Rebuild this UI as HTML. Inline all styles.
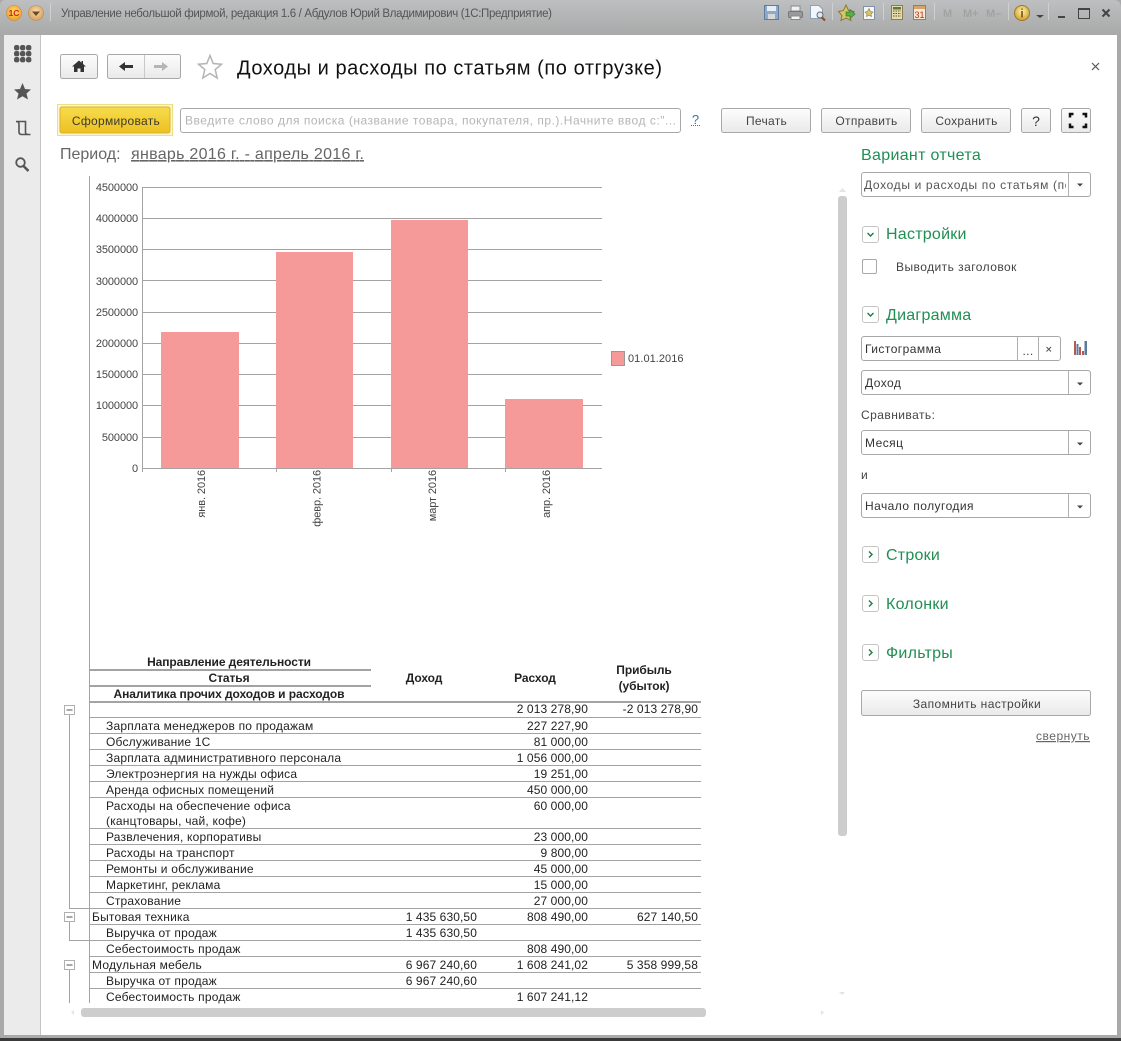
<!DOCTYPE html>
<html lang="ru"><head><meta charset="utf-8"><title>Доходы и расходы</title>
<style>
html,body{margin:0;padding:0;background:#fff;width:1121px;height:1041px;overflow:hidden}
svg{display:block;font-family:"Liberation Sans",sans-serif}
.t{font-size:12px;fill:#222;letter-spacing:.2px}
.r{font-size:12px;fill:#222;text-anchor:end;letter-spacing:.1px}
.b{font-size:12px;fill:#222;font-weight:bold;text-anchor:middle;letter-spacing:-.08px}
.g{font-size:16px;fill:#1f8f52;letter-spacing:.25px}
.f{font-size:12px;fill:#444;letter-spacing:.45px}
.c{font-size:12px;fill:#444;text-anchor:middle;letter-spacing:.3px}
.a{font-size:11px;fill:#444;text-anchor:end;letter-spacing:-.1px}
.l{stroke:#a3a3a3;stroke-width:1;fill:none}
.btn{fill:url(#bg);stroke:#a8a8a8}
.box{fill:#fff;stroke:#a8a8a8}
.exp{fill:#fff;stroke:#c4c4c4}
.chev{fill:none;stroke:#1a7a45;stroke-width:1.4}
</style></head><body>
<svg width="1121" height="1041" viewBox="0 0 1121 1041" xmlns="http://www.w3.org/2000/svg">
<defs>
<linearGradient id="tb" x1="0" y1="0" x2="0" y2="1"><stop offset="0" stop-color="#bdbfc0"/><stop offset="1" stop-color="#a8a8a8"/></linearGradient>
<linearGradient id="bg" x1="0" y1="0" x2="0" y2="1"><stop offset="0" stop-color="#fdfdfd"/><stop offset="1" stop-color="#e9e9e9"/></linearGradient>
<linearGradient id="yb" x1="0" y1="0" x2="0" y2="1"><stop offset="0" stop-color="#f7dc4c"/><stop offset="1" stop-color="#edc022"/></linearGradient>
<radialGradient id="o1" cx=".5" cy=".4" r=".6"><stop offset="0" stop-color="#ffe36a"/><stop offset="1" stop-color="#ef9a2c"/></radialGradient>
<radialGradient id="o2" cx=".5" cy=".4" r=".6"><stop offset="0" stop-color="#f6dcae"/><stop offset="1" stop-color="#d7a05c"/></radialGradient>
<radialGradient id="o3" cx=".5" cy=".4" r=".6"><stop offset="0" stop-color="#fff3b0"/><stop offset="1" stop-color="#cf9f2c"/></radialGradient>
</defs>
<!-- window frame -->
<rect width="1121" height="1041" fill="#a9a9a9"/>
<rect y="1038" width="1121" height="3" fill="#3a3a3a"/>
<path d="M0 36V6Q0 0 6 0H1113Q1121 0 1121 8V36Z" fill="url(#tb)"/>
<rect x="4" y="35" width="36" height="1000" fill="#ebebeb"/>
<rect x="40" y="35" width="1" height="1000" fill="#c4c4c4"/>
<rect x="41" y="35" width="1076" height="1000" fill="#fff"/>
<!-- title bar -->
<circle cx="14" cy="13" r="7.5" fill="url(#o1)" stroke="#d08a30" stroke-width=".6"/>
<text x="14" y="16" font-size="8.5" font-weight="bold" fill="#c9281e" text-anchor="middle">1С</text>
<circle cx="36" cy="13" r="7.5" fill="url(#o2)" stroke="#b98a50" stroke-width=".6"/>
<path d="M32 11.5h8l-4 4.5z" fill="#6a4a24"/>
<path d="M50.500 3V21M832.500 3V20M883.500 3V20M934.500 3V20M1008.500 3V20M1048.500 3V20" stroke="#d0d0d0" fill="none"/>
<text x="61" y="17" font-size="11.5" fill="#555" textLength="491" lengthAdjust="spacing">Управление небольшой фирмой, редакция 1.6 / Абдулов Юрий Владимирович  (1С:Предприятие)</text>
<!-- save -->
<rect x="764.500" y="5.500" width="14" height="14" fill="#8dabc8" stroke="#5f7c9c"/><rect x="767" y="6" width="9" height="5" fill="#e6eef5"/><rect x="768" y="14" width="7" height="5" fill="#d5d9dc"/>
<!-- print -->
<rect x="791" y="6" width="9" height="5" fill="#f0f0f0" stroke="#888"/><rect x="788.500" y="11.500" width="14" height="6" rx="1.500" fill="#9a9a9a" stroke="#777"/><rect x="791" y="16" width="9" height="3.500" fill="#f4f4f4" stroke="#888"/>
<!-- preview -->
<path d="M810.500 5.500H819L822.500 9V18.500H810.500Z" fill="#f2f6fa" stroke="#8da1b6"/><circle cx="820" cy="15" r="3" fill="#dfe9f2" stroke="#666"/><path d="M822 17.500L825 20.500" stroke="#8a4a2a" stroke-width="2"/>
<!-- star arrow -->
<path d="M846 5L848.500 10.500L854 11.500L850 15.500L851 20.500L846 18L841 20.500L842 15.500L838.500 11.500L843.500 10.500Z" fill="#d8c66a" stroke="#8c7a34"/>
<path d="M846 12h4v-2.500l5 4.500l-5 4.500V16h-4z" fill="#57b04a" stroke="#2f7a2c" stroke-width=".7"/>
<!-- star doc -->
<rect x="863.500" y="6.500" width="11" height="13" fill="#f4f7fa" stroke="#7d93ab"/><path d="M869 8.500L870.500 11.500L873 12L871 14L871.500 16.500L869 15.200L866.500 16.500L867 14L865 12L867.500 11.500Z" fill="#d9c56a" stroke="#8c7a34" stroke-width=".6"/>
<!-- calc -->
<rect x="891.500" y="5.500" width="11" height="14" fill="#e8dcae" stroke="#8d7c4c"/><rect x="893" y="7" width="8" height="2.500" fill="#5c7a3a"/><path d="M893 11h8M893 13.500h8M893 16h8" stroke="#4e5b33" stroke-dasharray="1.500 1"/>
<!-- calendar -->
<rect x="913.500" y="5.500" width="12" height="14" fill="#f5e8d4" stroke="#9a7d5c"/><rect x="914" y="6" width="11" height="3" fill="#d4a468"/>
<text x="919.500" y="18" font-size="9" fill="#b5331e" text-anchor="middle">31</text>
<!-- M keys -->
<g font-size="11" font-weight="bold" fill="#a3a2a0"><text x="943" y="17">M</text><text x="963" y="17">M+</text><text x="986" y="17">M–</text></g>
<circle cx="1022" cy="13" r="7.500" fill="url(#o3)" stroke="#9c7a2a"/><text x="1022" y="17.500" font-size="12" font-weight="bold" fill="#7a5510" text-anchor="middle">i</text>
<path d="M1036 15h8l-4 3z" fill="#444"/>
<rect x="1058" y="16" width="7" height="2" fill="#444"/>
<rect x="1078.500" y="8.500" width="11" height="10" fill="none" stroke="#444"/><rect x="1078" y="8" width="12" height="2" fill="#444"/>
<path d="M1102.500 9.500L1109.500 16.500M1109.500 9.500L1102.500 16.500" stroke="#444" stroke-width="2" fill="none"/>
<!-- sidebar icons -->
<g fill="#555"><rect x="14" y="45" width="5.400" height="5.400" rx="2.200"/><rect x="20" y="45" width="5.400" height="5.400" rx="2.200"/><rect x="26" y="45" width="5.400" height="5.400" rx="2.200"/><rect x="14" y="51" width="5.400" height="5.400" rx="2.200"/><rect x="20" y="51" width="5.400" height="5.400" rx="2.200"/><rect x="26" y="51" width="5.400" height="5.400" rx="2.200"/><rect x="14" y="57" width="5.400" height="5.400" rx="2.200"/><rect x="20" y="57" width="5.400" height="5.400" rx="2.200"/><rect x="26" y="57" width="5.400" height="5.400" rx="2.200"/></g>
<path d="M22.500 83L25 89L31 89.500L26.500 93.500L28 99.500L22.500 96.300L17 99.500L18.500 93.500L14 89.500L20 89Z" fill="#555"/>
<path d="M16 121.500H25.500V132.500Q25.500 134.500 28 134.500H30.500M16 121.500Q19 121.500 19 124V132Q19 134.500 22 134.500H28M25.500 121.500Q25.500 124 25.500 124" fill="none" stroke="#555" stroke-width="1.600"/>
<circle cx="20.500" cy="162.500" r="4.300" fill="none" stroke="#555" stroke-width="1.800"/><path d="M23.500 166L28.500 171" stroke="#555" stroke-width="2.600" fill="none"/>
<!-- nav -->
<rect class="btn" x="60.500" y="54.500" width="37" height="24" rx="2"/>
<path d="M79 60.500L72 66.500H74V72H77.500V68.500H80.500V72H84V66.500H86L83 64V61H81.500V62.700Z" fill="#333"/>
<rect class="btn" x="107.500" y="54.500" width="73" height="24" rx="2"/>
<path d="M144.500 55V78" stroke="#c8c8c8"/>
<path d="M119 66.500L125 62V65H133V68H125V71Z" fill="#333"/>
<path d="M168 66.500L162 62V65H154V68H162V71Z" fill="#b5b5b5"/>
<path d="M210 55.500L213.200 63.500L221.500 64.200L215.200 69.500L217.200 78L210 73.500L202.800 78L204.800 69.500L198.500 64.200L206.800 63.500Z" fill="#fff" stroke="#b4b4b4" stroke-width="1.500"/>
<text x="237" y="74.500" font-size="20" fill="#111" textLength="425" lengthAdjust="spacing">Доходы и расходы по статьям (по отгрузке)</text>
<path d="M1092 63L1099 70M1099 63L1092 70" stroke="#555" stroke-width="1.200" fill="none"/>
<!-- toolbar -->
<rect x="57.500" y="104.500" width="115" height="31" fill="#fbf6d4" stroke="#ecdf84"/>
<rect x="60" y="107" width="110" height="26" rx="2" fill="url(#yb)" stroke="#d9b32c"/>
<text x="116" y="125" class="c" style="fill:#3b3b2a">Сформировать</text>
<rect class="box" x="180.500" y="108.500" width="500" height="24" rx="2.500"/>
<text x="185" y="124.500" font-size="12" fill="#b5b5b5" textLength="491" lengthAdjust="spacing">Введите слово для поиска (название товара, покупателя, пр.).Начните ввод с:"...</text>
<text x="695.500" y="124" font-size="13" fill="#2b7da8" text-anchor="middle">?</text>
<path d="M691 125.500H700" stroke="#2b7da8" stroke-dasharray="1 1"/>
<rect class="btn" x="721.500" y="108.500" width="89" height="24" rx="2"/><text x="766.500" y="125" class="c">Печать</text>
<rect class="btn" x="821.500" y="108.500" width="89" height="24" rx="2"/><text x="866.500" y="125" class="c">Отправить</text>
<rect class="btn" x="921.500" y="108.500" width="89" height="24" rx="2"/><text x="966.500" y="125" class="c">Сохранить</text>
<rect class="btn" x="1021.500" y="108.500" width="29" height="24" rx="2"/><text x="1036" y="126" font-size="14" fill="#333" text-anchor="middle">?</text>
<rect class="btn" x="1061.500" y="108.500" width="29" height="24" rx="2"/>
<path d="M1070 117.500V114H1073.500M1082.500 114H1086V117.500M1086 123.500V127H1082.500M1073.500 127H1070V123.500" fill="none" stroke="#111" stroke-width="2.500"/>
<!-- period -->
<text x="60" y="159" font-size="16" fill="#666">Период:</text>
<text x="131" y="159" font-size="16" fill="#666" text-decoration="underline" textLength="233" lengthAdjust="spacing">январь 2016 г. - апрель 2016 г.</text>
<!-- chart -->
<path class="l" d="M89.500 176V1003"/>
<path class="l" d="M142 187.500H602M142 218.500H602M142 249.500H602M142 280.500H602M142 312.500H602M142 343.500H602M142 374.500H602M142 405.500H602M142 437.500H602M142 468.500H602M142.500 187V472M276.500 468V472M391.500 468V472M505.500 468V472"/>
<g fill="#f59a98"><rect x="161" y="332" width="78" height="136"/><rect x="276" y="252" width="77" height="216"/><rect x="391" y="220" width="77" height="248"/><rect x="505" y="399" width="78" height="69"/></g>
<text class="a" x="138" y="191">4500000</text><text class="a" x="138" y="222">4000000</text><text class="a" x="138" y="253">3500000</text><text class="a" x="138" y="285">3000000</text><text class="a" x="138" y="316">2500000</text><text class="a" x="138" y="347">2000000</text><text class="a" x="138" y="378">1500000</text><text class="a" x="138" y="409">1000000</text><text class="a" x="138" y="441">500000</text><text class="a" x="138" y="472">0</text>
<text class="a" transform="translate(205 470) rotate(-90)">янв. 2016</text>
<text class="a" transform="translate(320.500 470) rotate(-90)">февр. 2016</text>
<text class="a" transform="translate(436 470) rotate(-90)">март 2016</text>
<text class="a" transform="translate(550 470) rotate(-90)">апр. 2016</text>
<rect x="611.500" y="351.500" width="13" height="14" fill="#f59a98" stroke="#999"/>
<text x="628" y="362" font-size="11" fill="#444" letter-spacing=".05">01.01.2016</text>
<!-- table header -->
<text class="b" x="229" y="666">Направление деятельности</text>
<text class="b" x="229" y="682">Статья</text>
<text class="b" x="229" y="698">Аналитика прочих доходов и расходов</text>
<text class="b" x="424" y="682">Доход</text><text class="b" x="535" y="682">Расход</text>
<text class="b" x="644" y="674">Прибыль</text><text class="b" x="644" y="690">(убыток)</text>
<path d="M89 670H371M89 686H371M89 702H701" stroke="#a3a3a3" stroke-width="2" fill="none"/>
<path class="l" d="M89 717.500H701M89 733.500H701M89 749.500H701M89 765.500H701M89 781.500H701M89 797.500H701M89 828.500H701M89 844.500H701M89 860.500H701M89 876.500H701M89 892.500H701M89 908.500H701M89 924.500H701M89 940.500H701M89 956.500H701M89 972.500H701M89 988.500H701"/>
<!-- tree -->
<path class="l" d="M69.500 715V908.500H89M69.500 922V940.500H89M69.500 970V1003"/>
<rect class="exp" x="64.500" y="705.500" width="10" height="9" style="stroke:#b0b0b0"/><path d="M66.500 710H72.500" stroke="#555"/>
<rect class="exp" x="64.500" y="912.500" width="10" height="9" style="stroke:#b0b0b0"/><path d="M66.500 917H72.500" stroke="#555"/>
<rect class="exp" x="64.500" y="960.500" width="10" height="9" style="stroke:#b0b0b0"/><path d="M66.500 965H72.500" stroke="#555"/>
<!-- rows -->
<text class="r" x="588" y="713">2 013 278,90</text><text class="r" x="698" y="713">-2 013 278,90</text>
<text class="t" x="106" y="730">Зарплата менеджеров по продажам</text><text class="r" x="588" y="730">227 227,90</text>
<text class="t" x="106" y="746">Обслуживание 1С</text><text class="r" x="588" y="746">81 000,00</text>
<text class="t" x="106" y="762">Зарплата административного персонала</text><text class="r" x="588" y="762">1 056 000,00</text>
<text class="t" x="106" y="778">Электроэнергия на нужды офиса</text><text class="r" x="588" y="778">19 251,00</text>
<text class="t" x="106" y="794">Аренда офисных помещений</text><text class="r" x="588" y="794">450 000,00</text>
<text class="t" x="106" y="810">Расходы на обеспечение офиса</text><text class="r" x="588" y="810">60 000,00</text>
<text class="t" x="106" y="825">(канцтовары, чай, кофе)</text>
<text class="t" x="106" y="841">Развлечения, корпоративы</text><text class="r" x="588" y="841">23 000,00</text>
<text class="t" x="106" y="857">Расходы на транспорт</text><text class="r" x="588" y="857">9 800,00</text>
<text class="t" x="106" y="873">Ремонты и обслуживание</text><text class="r" x="588" y="873">45 000,00</text>
<text class="t" x="106" y="889">Маркетинг, реклама</text><text class="r" x="588" y="889">15 000,00</text>
<text class="t" x="106" y="905">Страхование</text><text class="r" x="588" y="905">27 000,00</text>
<text class="t" x="92" y="921">Бытовая техника</text><text class="r" x="477" y="921">1 435 630,50</text><text class="r" x="588" y="921">808 490,00</text><text class="r" x="698" y="921">627 140,50</text>
<text class="t" x="106" y="937">Выручка от продаж</text><text class="r" x="477" y="937">1 435 630,50</text>
<text class="t" x="106" y="953">Себестоимость продаж</text><text class="r" x="588" y="953">808 490,00</text>
<text class="t" x="92" y="969">Модульная мебель</text><text class="r" x="477" y="969">6 967 240,60</text><text class="r" x="588" y="969">1 608 241,02</text><text class="r" x="698" y="969">5 358 999,58</text>
<text class="t" x="106" y="985">Выручка от продаж</text><text class="r" x="477" y="985">6 967 240,60</text>
<text class="t" x="106" y="1001">Себестоимость продаж</text><text class="r" x="588" y="1001">1 607 241,12</text>
<!-- scrollbars -->
<rect x="838" y="196" width="9" height="640" rx="3" fill="#cdcdcd"/>
<rect x="81" y="1008" width="625" height="9" rx="3" fill="#cdcdcd"/>
<path d="M839 192L842.500 188L846 192Z" fill="#e4e4e4"/><path d="M839 992H845L842 995Z" fill="#e4e4e4"/>
<path d="M74 1010V1015L71 1012.500Z" fill="#e4e4e4"/><path d="M821 1010V1015L824 1012.500Z" fill="#e4e4e4"/>
<!-- right panel -->
<text class="g" x="861" y="160" textLength="120" lengthAdjust="spacing">Вариант отчета</text>
<rect class="box" x="861.500" y="172.500" width="229" height="24" rx="2.500"/><path d="M1068.500 173V196" stroke="#b0b0b0"/>
<svg x="864" y="172" width="202" height="24"><text x="0" y="17" font-size="12" fill="#555" letter-spacing=".65">Доходы и расходы по статьям (по отгрузке)</text></svg>
<path d="M1077 183.500H1083L1080 186.500Z" fill="#444"/>
<rect class="exp" x="862.500" y="226.500" width="16" height="16" rx="2.500"/><path class="chev" d="M867.500 233L870.500 236L873.500 233"/>
<text class="g" x="886" y="239">Настройки</text>
<rect class="box" x="862.500" y="259.500" width="14" height="14" rx="1.500"/>
<text class="f" x="896" y="271">Выводить заголовок</text>
<rect class="exp" x="862.500" y="306.500" width="16" height="16" rx="2.500"/><path class="chev" d="M867.500 313L870.500 316L873.500 313"/>
<text class="g" x="886" y="320">Диаграмма</text>
<rect class="box" x="861.500" y="336.500" width="199" height="24" rx="2.500"/><path d="M1017.500 337V360M1038.500 337V360" stroke="#b0b0b0"/>
<text class="f" x="865" y="353" style="fill:#333">Гистограмма</text>
<text class="c" x="1028" y="355">...</text><path d="M1046.500 347L1051 351.500M1051 347L1046.500 351.500" stroke="#555" fill="none"/>
<g><rect x="1074" y="341" width="2" height="14" fill="#b55a52"/><rect x="1076.500" y="344" width="2" height="11" fill="#5a7a9a"/><rect x="1079" y="347" width="2" height="8" fill="#b55a52"/><rect x="1082" y="351" width="2" height="4" fill="#b55a52"/><rect x="1084.500" y="341" width="2.500" height="14" fill="#5a7a9a"/></g>
<rect class="box" x="861.500" y="370.500" width="229" height="24" rx="2.500"/><path d="M1068.500 371V394" stroke="#b0b0b0"/><text class="f" x="865" y="387" style="fill:#333">Доход</text><path d="M1077 382.500H1083L1080 385.500Z" fill="#444"/>
<text class="f" x="861" y="419">Сравнивать:</text>
<rect class="box" x="861.500" y="430.500" width="229" height="24" rx="2.500"/><path d="M1068.500 431V454" stroke="#b0b0b0"/><text class="f" x="865" y="447" style="fill:#333">Месяц</text><path d="M1077 442.500H1083L1080 445.500Z" fill="#444"/>
<text class="f" x="861" y="479">и</text>
<rect class="box" x="861.500" y="493.500" width="229" height="24" rx="2.500"/><path d="M1068.500 494V517" stroke="#b0b0b0"/><text class="f" x="865" y="510" style="fill:#333">Начало полугодия</text><path d="M1077 505.500H1083L1080 508.500Z" fill="#444"/>
<rect class="exp" x="862.500" y="546.500" width="16" height="16" rx="2.500"/><path class="chev" d="M869 551.500L872 554.500L869 557.500"/><text class="g" x="886" y="560">Строки</text>
<rect class="exp" x="862.500" y="595.500" width="16" height="16" rx="2.500"/><path class="chev" d="M869 600.500L872 603.500L869 606.500"/><text class="g" x="886" y="609">Колонки</text>
<rect class="exp" x="862.500" y="644.500" width="16" height="16" rx="2.500"/><path class="chev" d="M869 649.500L872 652.500L869 655.500"/><text class="g" x="886" y="658">Фильтры</text>
<rect class="btn" x="861.500" y="690.500" width="229" height="25" rx="2"/><text class="c" x="977" y="708" style="letter-spacing:.4px">Запомнить настройки</text>
<text x="1090" y="740" font-size="12" fill="#666" text-anchor="end" text-decoration="underline" letter-spacing=".5">свернуть</text>
</svg>
</body></html>
